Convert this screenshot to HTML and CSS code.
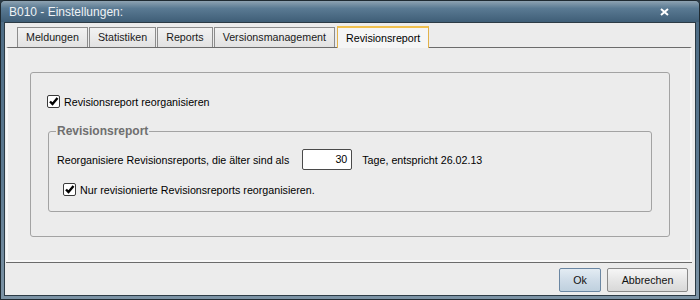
FILE: index.html
```html
<!DOCTYPE html>
<html lang="de">

<head>
    <meta charset="UTF-8">
    <title>B010 - Einstellungen:</title>
    <link rel="stylesheet" href="styles.css">
</head>

<body>
    <div class="window">
        <!-- Title bar -->
        <div class="titlebar">
            <span class="title">B010 - Einstellungen:</span>
            <svg class="close" width="9" height="8" viewBox="0 0 9 8">
                <path d="M1 1 L8 7 M8 1 L1 7" stroke="#fff" stroke-width="2" />
            </svg>
        </div>

        <div class="client">
            <!-- Tabs -->
            <div class="tabs">
                <div class="tab">Meldungen</div>
                <div class="tab">Statistiken</div>
                <div class="tab">Reports</div>
                <div class="tab">Versionsmanagement</div>
                <div class="tab active">Revisionsreport</div>
            </div>

            <div class="panel">
                <div class="group">
                    <label class="check-row">
                        <span class="checkbox">
                            <svg width="11" height="11" viewBox="0 0 11 11">
                                <path d="M2 5.5 L4.5 8 L9.5 2" fill="none" stroke="#000" stroke-width="2.4" />
                            </svg>
                        </span>
                        Revisionsreport reorganisieren
                    </label>

                    <fieldset class="subgroup">
                        <legend>Revisionsreport</legend>
                        <div class="days-row">
                            <span>Reorganisiere Revisionsreports, die älter sind als</span>
                            <span class="field">30</span>
                            <span>Tage, entspricht 26.02.13</span>
                        </div>
                        <label class="check-row sub">
                            <span class="checkbox">
                                <svg width="11" height="11" viewBox="0 0 11 11">
                                    <path d="M2 5.5 L4.5 8 L9.5 2" fill="none" stroke="#000" stroke-width="2.4" />
                                </svg>
                            </span>
                            Nur revisionierte Revisionsreports reorganisieren.
                        </label>
                    </fieldset>
                </div>
            </div>

            <!-- Buttons -->
            <div class="footer">
                <button class="btn default">Ok</button>
                <button class="btn">Abbrechen</button>
            </div>
        </div>
    </div>
</body>

</html>
```

FILE: styles.css
```css
* {
    box-sizing: border-box;
}

body {
    margin: 0;
    padding: 0;
    font-family: "Liberation Sans", Arial, sans-serif;
    font-size: 10.7px;
    color: #111;
    background-color: #2b3a44;
}

.window {
    width: 700px;
    height: 300px;
    border: 1px solid #1f2a31;
    border-radius: 5px 5px 0 0;
    background: linear-gradient(#4c6b84, #5d7a91 60%, #7c93a5 100%);
    padding: 0 3px 3px 3px;
    display: flex;
    flex-direction: column;
}

.titlebar {
    height: 21px;
    flex: none;
    display: flex;
    align-items: center;
    justify-content: space-between;
    padding: 0 30px 0 8px;
    background: linear-gradient(#8ea3b2, #5a7a93 35%, #3f5e77);
    margin: 0 -3px;
    border-radius: 4px 4px 0 0;
}

.title {
    color: #eef2f5;
    font-size: 12px;
}

.close {
    display: block;
}

.client {
    flex: 1;
    display: flex;
    flex-direction: column;
    background-color: #ececec;
    border: 1px solid #2c3b45;
    padding: 3px 3px 0 1px;
}

/* Tabs */
.tabs {
    display: flex;
    padding-left: 11px;
    height: 21px;
    flex: none;
    align-items: flex-start;
}

.tab {
    height: 20px;
    margin-top: 1px;
    line-height: 19px;
    padding: 0 8px;
    border: 1px solid #8c8c8c;
    border-bottom: none;
    background: linear-gradient(#f2f2f2, #e2e2e2);
    color: #1a1a1a;
}

.tab + .tab {
    margin-left: 1px;
}

.tab.active {
    height: 22px;
    margin-top: 0;
    margin-left: 2px;
    line-height: 20px;
    padding: 0 8px;
    border: 1px solid #e2b24a;
    border-top: 2px solid #f0c04e;
    border-bottom: none;
    background: #f5f5f5;
    color: #000;
    position: relative;
    z-index: 1;
}

.panel {
    height: 215px;
    flex: none;
    border-top: 1px solid #6b6b6b;
    border-left: 2px solid #f7f7f7;
    border-right: 2px solid #f7f7f7;
    border-bottom: 2px solid #f7f7f7;
    background-color: #ececec;
    padding: 24px 20px 0 22px;
}

.group {
    height: 165px;
    border: 1px solid #a3a3a3;
    border-radius: 3px;
    padding: 22px 17px 0 16px;
}

.check-row {
    display: flex;
    align-items: center;
    gap: 4px;
    height: 13px;
    color: #000;
}

.checkbox {
    width: 13px;
    height: 13px;
    border: 1px solid #3a3a3a;
    border-radius: 2px;
    background: #fff;
    display: flex;
}

.subgroup {
    margin: 16px 0 0 1px;
    padding: 0 9px 0 8px;
    height: 88px;
    border: 1px solid #a3a3a3;
    border-radius: 3px;
}

.subgroup legend {
    padding: 0 1px;
    margin-left: -1px;
    font-size: 12px;
    font-weight: bold;
    color: #6f6f6f;
}

.days-row {
    display: flex;
    align-items: center;
    margin-top: 11px;
    color: #000;
}

.field {
    width: 50px;
    height: 21px;
    line-height: 19px;
    margin: 0 10px 0 13px;
    padding-right: 4px;
    border: 1px solid #4a4a4a;
    border-radius: 2px;
    background: #fff;
    text-align: right;
}

.check-row.sub {
    margin: 13px 0 0 6px;
}

/* Footer */
.footer {
    flex: 1;
    display: flex;
    justify-content: flex-end;
    align-items: flex-start;
    gap: 6px;
    padding: 5px 4px 0 0;
    border-top: 1px solid #6b6b6b;
}

.btn {
    height: 24px;
    font-family: "Liberation Sans", Arial, sans-serif;
    font-size: 10.7px;
    color: #111;
    padding: 0;
    border: 1px solid #8a8a8a;
    border-radius: 2px;
    background: linear-gradient(#f6f6f6, #e6e6e6 50%, #d8d8d8);
    width: 81px;
}

.btn.default {
    width: 42px;
    border-color: #6a86a2;
    background: linear-gradient(#e3ecf3, #cfdce8 50%, #bfd0de);
}
```
